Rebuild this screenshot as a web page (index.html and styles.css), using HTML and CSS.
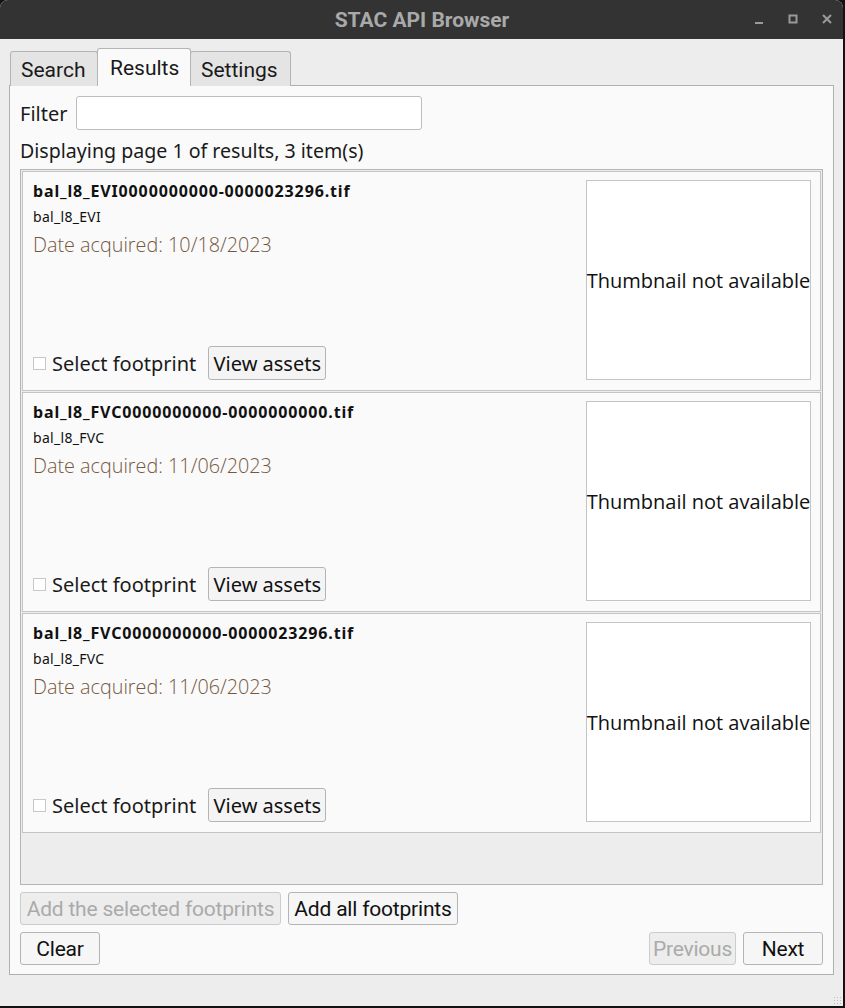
FILE: index.html
```html
<!DOCTYPE html>
<html>
<head>
<meta charset="utf-8">
<link rel="stylesheet" href="styles.css">
</head>
<body>
<div class="window">
  <div class="titlebar">
    <span class="title">STAC API Browser</span>
    <div class="wm-buttons">
      <svg class="wm" width="14" height="14" viewBox="0 0 14 14"><rect x="3" y="10" width="8" height="2" fill="#9a9a9a"/></svg>
      <svg class="wm" width="14" height="14" viewBox="0 0 14 14"><rect x="3.5" y="3.5" width="7" height="7" fill="none" stroke="#9a9a9a" stroke-width="2"/></svg>
      <svg class="wm" width="14" height="14" viewBox="0 0 14 14"><path d="M3 3 L11 11 M11 3 L3 11" stroke="#9a9a9a" stroke-width="2"/></svg>
    </div>
  </div>
  <div class="content">
    <div class="tabs">
      <div class="tab">Search</div>
      <div class="tab active">Results</div>
      <div class="tab">Settings</div>
    </div>
    <div class="panel">
      <div class="filter-row">
        <span class="label">Filter</span>
        <div class="input"></div>
      </div>
      <div class="status">Displaying page 1 of results, 3 item(s)</div>
      <div class="scroll">
        <div class="card">
          <div class="info">
            <div class="name">bal_l8_EVI0000000000-0000023296.tif</div>
            <div class="coll">bal_l8_EVI</div>
            <div class="date">Date acquired: 10/18/2023</div>
            <div class="actions">
              <span class="check"></span><span class="check-label">Select footprint</span>
              <span class="btn card-btn">View assets</span>
            </div>
          </div>
          <div class="thumb">Thumbnail not available</div>
        </div>
        <div class="card">
          <div class="info">
            <div class="name">bal_l8_FVC0000000000-0000000000.tif</div>
            <div class="coll">bal_l8_FVC</div>
            <div class="date">Date acquired: 11/06/2023</div>
            <div class="actions">
              <span class="check"></span><span class="check-label">Select footprint</span>
              <span class="btn card-btn">View assets</span>
            </div>
          </div>
          <div class="thumb">Thumbnail not available</div>
        </div>
        <div class="card">
          <div class="info">
            <div class="name">bal_l8_FVC0000000000-0000023296.tif</div>
            <div class="coll">bal_l8_FVC</div>
            <div class="date">Date acquired: 11/06/2023</div>
            <div class="actions">
              <span class="check"></span><span class="check-label">Select footprint</span>
              <span class="btn card-btn">View assets</span>
            </div>
          </div>
          <div class="thumb">Thumbnail not available</div>
        </div>
      </div>
      <div class="row row-add">
        <span class="btn disabled btn-sel">Add the selected footprints</span>
        <span class="btn btn-all">Add all footprints</span>
      </div>
      <div class="row row-nav">
        <span class="btn btn-clear">Clear</span>
        <span class="spacer"></span>
        <span class="btn disabled btn-prev">Previous</span>
        <span class="btn btn-next">Next</span>
      </div>
    </div>
    <div class="grip"></div>
  </div>
</div>
</body>
</html>
```

FILE: styles.css
```css
html, body {
  margin: 0;
  padding: 0;
  background: #111214;
}
body {
  width: 845px;
  height: 1008px;
  overflow: hidden;
}
.window {
  width: 843px;
  height: 1006px;
  background: #ededed;
  border-radius: 8px 8px 0 0;
  overflow: hidden;
  display: flex;
  flex-direction: column;
}
.titlebar {
  height: 39px;
  flex: none;
  background: #333333;
  display: flex;
  align-items: center;
  justify-content: center;
  position: relative;
}
.title {
  font-family: Roboto, "Noto Sans", sans-serif;
  font-weight: bold;
  font-size: 21px;
  color: #a9a9a9;
  margin-left: 1px;
}
.wm-buttons {
  position: absolute;
  right: 9px;
  top: 12px;
  display: flex;
  gap: 20px;
}
.content {
  flex: 1;
  padding: 10px 10px 0 9px;
  position: relative;
}
.tabs {
  display: flex;
  align-items: flex-end;
  padding-left: 1px;
  height: 37px;
  margin-bottom: -1px;
  position: relative;
  z-index: 1;
}
.tab {
  font-family: Roboto, "Noto Sans", sans-serif;
  font-size: 21px;
  color: #1a1a1a;
  height: 35px;
  box-sizing: border-box;
  border: 1px solid #b4b4b4;
  border-bottom: none;
  border-radius: 3px 3px 0 0;
  background: #e4e4e4;
  padding: 2px 10px 0;
  display: flex;
  align-items: center;
  margin-right: -1px;
  white-space: nowrap;
}
.tab:first-child { width: 88px; }
.tab.active {
  background: #fafafa;
  height: 38px;
  width: 94px;
  position: relative;
  z-index: 2;
  padding-top: 0;
  padding-left: 12px;
}
.tab:last-child { width: 101px; }
.panel {
  background: #fafafa;
  border: 1px solid #b0b0b0;
  height: 890px;
  box-sizing: border-box;
  width: 825px;
  padding: 10px 10px 0 10px;
  display: flex;
  flex-direction: column;
  font-family: "Noto Sans", "Open Sans", sans-serif;
  color: #1a1a1a;
}
.filter-row {
  display: flex;
  align-items: center;
  height: 34px;
}
.label {
  font-size: 20px;
  width: 56px;
}
.input {
  width: 346px;
  height: 34px;
  box-sizing: border-box;
  background: #ffffff;
  border: 1px solid #bdbdbd;
  border-radius: 3px;
}
.status {
  font-size: 19.6px;
  height: 22px;
  line-height: 22px;
  margin-top: 10px;
  margin-bottom: 7px;
}
.scroll {
  height: 716px;
  box-sizing: border-box;
  border: 1px solid #b4b4b4;
  background: #ededed;
  padding: 1px 1px 0 1px;
  display: flex;
  flex-direction: column;
  gap: 1px;
}
.card {
  height: 220px;
  flex: none;
  box-sizing: border-box;
  border: 1px solid #c4c4c4;
  background: #fafafa;
  display: flex;
  padding: 8px 9px 10px 10px;
  width: 799px;
}
.info {
  flex: 1;
  display: flex;
  flex-direction: column;
}
.name {
  font-weight: bold;
  font-size: 16px;
  letter-spacing: 0.85px;
  line-height: 20px;
  margin-top: 1px;
  color: #111;
}
.coll {
  font-size: 14px;
  letter-spacing: 0.3px;
  line-height: 18px;
  margin-top: 7px;
  color: #111;
}
.date {
  font-family: "Open Sans", "Noto Sans", sans-serif;
  font-weight: 300;
  font-size: 19.8px;
  line-height: 26px;
  margin-top: 6px;
  color: #76583f;
}
.actions {
  margin-top: auto;
  display: flex;
  align-items: center;
  height: 34px;
}
.check {
  width: 11px;
  height: 11px;
  border: 1px solid #c8c8c8;
  background: #fff;
  margin-right: 6px;
  margin-top: 1px;
}
.check-label {
  font-size: 20px;
  margin-right: 12px;
}
.btn {
  box-sizing: border-box;
  border: 1px solid #b4b4b4;
  border-radius: 3px;
  background: #f4f4f4;
  display: inline-flex;
  align-items: center;
  justify-content: center;
  font-size: 20px;
  color: #111;
  white-space: nowrap;
}
.card-btn {
  width: 118px;
  height: 34px;
}
.thumb {
  width: 225px;
  height: 200px;
  box-sizing: border-box;
  border: 1px solid #c4c4c4;
  background: #ffffff;
  display: flex;
  align-items: center;
  justify-content: center;
  font-family: "Open Sans", "Noto Sans", sans-serif;
  font-size: 20px;
  white-space: nowrap;
  color: #111;
}
.row {
  display: flex;
  gap: 7px;
}
.row-add {
  margin-top: 7px;
}
.row-nav {
  margin-top: 7px;
}
.row .btn {
  height: 33px;
  font-family: Roboto, "Noto Sans", sans-serif;
  font-size: 21px;
  background: #f6f6f6;
  letter-spacing: -0.2px;
}
.btn.disabled {
  color: #aaaaaa;
  background: #ededed;
  border-color: #cccccc;
}
.btn-sel { width: 261px; }
.btn-all { width: 170px; }
.btn-clear { width: 80px; }
.spacer { flex: 1; }
.btn-prev { width: 87px; }
.btn-next { width: 80px; }
.grip {
  position: absolute;
  right: 2px;
  bottom: 2px;
  width: 8px;
  height: 8px;
  background-image: radial-gradient(circle, #bbb 0.8px, transparent 1px);
  background-size: 3px 3px;
}
```
